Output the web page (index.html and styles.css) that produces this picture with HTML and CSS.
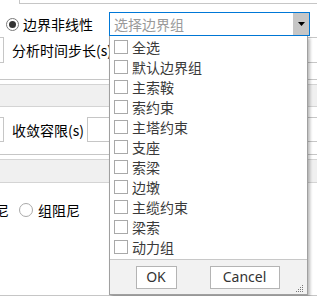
FILE: index.html
```html
<!DOCTYPE html>
<html>
<head>
<meta charset="utf-8">
<link rel="stylesheet" href="styles.css">
</head>
<body>
<div class="screen">
  <div class="topbox"></div>
  <div class="row row1">
    <div class="left1">
      <span class="radio checked"></span>
      <span class="label">边界非线性</span>
    </div>
    <div class="combo">
      <span class="placeholder">选择边界组</span>
      <span class="drop"><svg width="7" height="4" viewBox="0 0 7 4"><path d="M0 0H7L3.5 4Z" fill="#000"/></svg></span>
    </div>
  </div>
  <div class="row row2">
    <span class="stub"></span>
    <span class="label lab2">分析时间步长(s)</span>
    <span class="field"></span>
  </div>
  <div class="sep"></div>
  <div class="band"></div>
  <div class="row row3">
    <span class="stub"></span>
    <span class="label lab3">收敛容限(s)</span>
    <span class="field field3"></span>
  </div>
  <div class="sep sep2"></div>
  <div class="band band2"></div>
  <div class="row row4">
    <span class="label clipped">阻尼</span>
    <span class="radio"></span>
    <span class="label">组阻尼</span>
  </div>
  <div class="bottomline"></div>

  <div class="popup">
    <ul class="list">
      <li><span class="cb"></span>全选</li>
      <li><span class="cb"></span>默认边界组</li>
      <li><span class="cb"></span>主索鞍</li>
      <li><span class="cb"></span>索约束</li>
      <li><span class="cb"></span>主塔约束</li>
      <li><span class="cb"></span>支座</li>
      <li><span class="cb"></span>索梁</li>
      <li><span class="cb"></span>边墩</li>
      <li><span class="cb"></span>主缆约束</li>
      <li><span class="cb"></span>梁索</li>
      <li><span class="cb"></span>动力组</li>
    </ul>
    <div class="footer">
      <button class="btn ok">OK</button>
      <button class="btn cancel">Cancel</button>
      <svg class="grip" width="7" height="7" viewBox="0 0 7 7">
        <rect x="6" y="0" width="1" height="1" fill="#777"/>
        <rect x="4" y="2" width="1" height="1" fill="#777"/>
        <rect x="6" y="2" width="1" height="1" fill="#777"/>
        <rect x="2" y="4" width="1" height="1" fill="#777"/>
        <rect x="4" y="4" width="1" height="1" fill="#777"/>
        <rect x="6" y="4" width="1" height="1" fill="#777"/>
        <rect x="0" y="6" width="1" height="1" fill="#777"/>
        <rect x="2" y="6" width="1" height="1" fill="#777"/>
        <rect x="4" y="6" width="1" height="1" fill="#777"/>
        <rect x="6" y="6" width="1" height="1" fill="#777"/>
      </svg>
    </div>
  </div>
</div>
</body>
</html>
```
FILE: styles.css
```css
* { box-sizing: border-box; }
html, body { margin: 0; padding: 0; background: #fff; }
body {
  font-family: "Noto Sans CJK SC", "Noto Sans", sans-serif;
  font-size: 14px;
  color: #000;
}
.screen {
  position: relative;
  width: 317px;
  height: 296px;
  overflow: hidden;
}
.topbox {
  margin-left: 19px;
  height: 4px;
  border-left: 1px solid #c6c6c6;
  border-bottom: 1px solid #c6c6c6;
}
.row {
  display: flex;
  align-items: center;
  white-space: nowrap;
}
.row1 { margin-top: 8px; height: 24px; }
.left1 {
  width: 109px;
  display: flex;
  align-items: center;
}
.radio {
  flex: none;
  width: 13px;
  height: 13px;
  border-radius: 50%;
  border: 1px solid #a9a9a9;
  background: #fff;
  position: relative;
}
.radio.checked { margin-left: 6px; border-color: #7a7a7a; }
.radio.checked::after {
  content: "";
  position: absolute;
  left: 2px; top: 2px;
  width: 7px; height: 7px;
  border-radius: 50%;
  background: #333;
}
.row1 .label { margin-left: 4px; }
.label { line-height: 18px; }
.combo {
  width: 201px;
  height: 24px;
  border: 1px solid #0078d7;
  display: flex;
  align-items: center;
  background: #fff;
}
.placeholder { color: #9a9a9a; padding-left: 4px; flex: 1; }
.drop {
  width: 16px;
  height: 22px;
  background: #c6c6c6;
  display: flex;
  align-items: center;
  justify-content: center;
}
.row2 { margin-top: 1px; height: 26px; }
.stub {
  flex: none;
  width: 4px;
  height: 100%;
  border: 1px solid #c6c6c6;
  border-left: 0;
}
.lab2 { margin-left: 8px; }
.field {
  flex: none;
  margin-left: 4px;
  width: 300px;
  height: 100%;
  border: 1px solid #c6c6c6;
}
.sep { margin-top: 16px; height: 1px; background: #c6c6c6; }
.band {
  margin-top: 4px;
  height: 23px;
  background: #f0f0f0;
  border-top: 1px solid #d4d4d4;
  border-bottom: 1px solid #d4d4d4;
}
.row3 { margin-top: 10px; height: 25px; }
.lab3 { margin-left: 8px; }
.field3 { margin-left: 3px; }
.sep2 { margin-top: 12px; }
.band2 { height: 24px; }
.row4 { margin-top: 18px; height: 18px; }
.clipped { margin-left: -19px; }
.row4 .radio { margin-left: 10px; width: 14px; height: 14px; }
.row4 .radio + .label { margin-left: 5px; }
.bottomline { margin-top: 76px; height: 1px; background: #c6c6c6; }

.popup {
  position: absolute;
  left: 109px;
  top: 36px;
  width: 199px;
  height: 259px;
  border: 1px solid #a0a0a0;
  border-top: 0;
  background: #fff;
  box-shadow: 2px 2px 3px rgba(0, 0, 0, 0.28);
  display: flex;
  flex-direction: column;
}
.list {
  list-style: none;
  margin: 0;
  padding: 1px 0 2px 0;
}
.list li {
  height: 20px;
  display: flex;
  align-items: center;
  padding-left: 4px;
  color: #3a3a3a;
  line-height: 20px;
}
.cb {
  flex: none;
  width: 14px;
  height: 14px;
  border: 1px solid #a9a9a9;
  background: #fff;
  margin-right: 4px;
}
.footer {
  flex: 1;
  border-top: 1px solid #c8c8c8;
  background: #f2f2f2;
  display: flex;
  align-items: center;
  justify-content: center;
  gap: 33px;
  position: relative;
  padding-right: 2px;
}
.btn {
  font-family: "Noto Sans", "Noto Sans CJK SC", sans-serif;
  font-size: 14px;
  color: #333;
  background: #fff;
  border: 1px solid #b4b4b4;
  height: 23px;
  padding: 0;
  line-height: 20px;
}
.ok { width: 41px; }
.cancel { width: 70px; }
.grip {
  position: absolute;
  right: 4px;
  bottom: 2px;
}
```
